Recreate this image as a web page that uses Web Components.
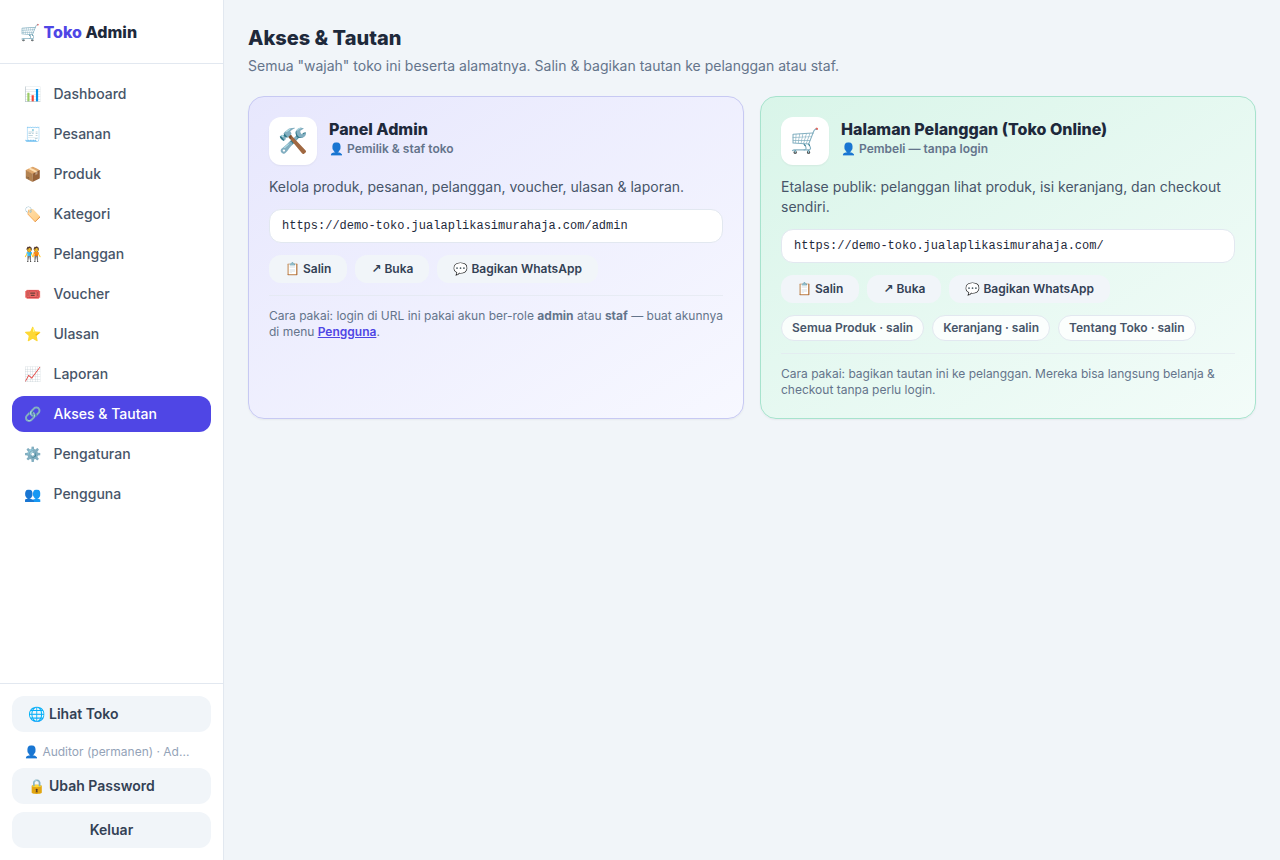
<!DOCTYPE html>
<html lang="id">
<head>
<meta charset="utf-8">
<title>Toko Admin</title>
<style>
  body {
    margin: 0;
    background: #f1f5f9;
    color: #1e293b;
    font: 14px/20px Inter, "Liberation Sans", sans-serif;
  }
</style>
</head>
<body>
<admin-app></admin-app>

<script>
class NavItem extends HTMLElement {
  constructor () {
    super()
    this.attachShadow({ mode: 'open' })
  }

  connectedCallback () {
    this.shadowRoot.innerHTML = `
      <style>
        :host { display: block; }
        a {
          display: flex;
          align-items: center;
          gap: 12.5px;
          padding: 8px 12px;
          border-radius: 12px;
          font-weight: 500;
          color: #475569;
        }
        :host([active]) a { background: #4f46e5; color: #fff; }
      </style>
      <a><span>${this.getAttribute('icon')}</span><span><slot></slot></span></a>
    `
  }
}
customElements.define('nav-item', NavItem)

class SoftButton extends HTMLElement {
  constructor () {
    super()
    this.attachShadow({ mode: 'open' })
  }

  connectedCallback () {
    this.shadowRoot.innerHTML = `
      <style>
        :host {
          display: block;
          padding: 8px 16px;
          border-radius: 12px;
          background: #f1f5f9;
          color: #334155;
          font-weight: 600;
        }
        :host([center]) { text-align: center; }
        :host([small]) { padding: 6px 16px; font-size: 12px; line-height: 16px; }
        ::slotted(.icon) { margin-right: 0.5px; }
        ::slotted(.arrow) { font-family: "DejaVu Sans", sans-serif; line-height: 1; }
      </style>
      <slot></slot>
    `
  }
}
customElements.define('soft-button', SoftButton)

class LinkChip extends HTMLElement {
  constructor () {
    super()
    this.attachShadow({ mode: 'open' })
  }

  connectedCallback () {
    this.shadowRoot.innerHTML = `
      <style>
        :host {
          display: block;
          padding: 4px 10px;
          border: 1px solid #e2e8f0;
          border-radius: 999px;
          background: rgba(255, 255, 255, 0.8);
          color: #475569;
          font-size: 12px;
          line-height: 16px;
          font-weight: 600;
        }
      </style>
      <slot></slot>
    `
  }
}
customElements.define('link-chip', LinkChip)

class SideBar extends HTMLElement {
  constructor () {
    super()
    this.attachShadow({ mode: 'open' })
  }

  connectedCallback () {
    this.shadowRoot.innerHTML = `
      <style>
        :host {
          display: flex;
          flex-direction: column;
          box-sizing: border-box;
          width: 224px;
          border-right: 1px solid #e2e8f0;
          background: #fff;
        }
        header {
          display: flex;
          align-items: center;
          box-sizing: border-box;
          height: 64px;
          padding: 0 20px;
          border-bottom: 1px solid #e2e8f0;
          font-size: 16px;
          line-height: 24px;
          font-weight: 800;
          white-space: pre;
        }
        header span { color: #4f46e5; }
        nav {
          display: flex;
          flex: 1;
          flex-direction: column;
          gap: 4px;
          padding: 12px;
        }
        footer {
          display: flex;
          flex-direction: column;
          gap: 8px;
          padding: 12px;
          border-top: 1px solid #e2e8f0;
        }
        .user {
          padding: 4px 12px 0;
          overflow: hidden;
          color: #94a3b8;
          font-size: 12px;
          line-height: 16px;
          text-overflow: ellipsis;
          white-space: nowrap;
        }
      </style>
      <header>🛒 <span>Toko</span> Admin</header>
      <nav>
        <nav-item icon="📊">Dashboard</nav-item>
        <nav-item icon="🧾">Pesanan</nav-item>
        <nav-item icon="📦">Produk</nav-item>
        <nav-item icon="🏷️">Kategori</nav-item>
        <nav-item icon="🧑‍🤝‍🧑">Pelanggan</nav-item>
        <nav-item icon="🎟️">Voucher</nav-item>
        <nav-item icon="⭐">Ulasan</nav-item>
        <nav-item icon="📈">Laporan</nav-item>
        <nav-item icon="🔗" active>Akses &amp; Tautan</nav-item>
        <nav-item icon="⚙️">Pengaturan</nav-item>
        <nav-item icon="👥">Pengguna</nav-item>
      </nav>
      <footer>
        <soft-button><span class="icon">🌐</span> Lihat Toko</soft-button>
        <div class="user">👤 Auditor (permanen) · Ad...</div>
        <soft-button><span class="icon">🔒</span> Ubah Password</soft-button>
        <soft-button center>Keluar</soft-button>
      </footer>
    `
  }
}
customElements.define('side-bar', SideBar)

class AccessCard extends HTMLElement {
  constructor () {
    super()
    this.attachShadow({ mode: 'open' })
  }

  connectedCallback () {
    this.shadowRoot.innerHTML = `
      <style>
        :host {
          display: block;
          box-sizing: border-box;
          padding: 20px;
          border: 1px solid #c7c9f3;
          border-radius: 16px;
          background: linear-gradient(to bottom right, #e7e7fd, #f7f8ff) border-box;
          box-shadow: 0 1px 2px rgba(0, 0, 0, 0.05);
        }
        :host([tone="green"]) {
          border-color: #a7e3cd;
          background: linear-gradient(to bottom right, #d9f5e9, #f3fcf9) border-box;
        }
        .head { display: flex; align-items: flex-start; gap: 12px; }
        .icon {
          display: grid;
          place-items: center;
          width: 48px;
          height: 48px;
          border-radius: 12px;
          background: #fff;
          box-shadow: 0 1px 2px rgba(0, 0, 0, 0.05);
          font-size: 24px;
          line-height: 32px;
        }
        h2 { margin: 0; font-size: 16px; line-height: 24px; font-weight: 800; }
        .who { color: #64748b; font-size: 12px; line-height: 16px; font-weight: 600; }
        p { margin: 12px 0 0; color: #475569; }
        .url {
          margin-top: 12px;
          padding: 8px 12px;
          border: 1px solid #e2e8f0;
          border-radius: 12px;
          background: #fff;
          font: 12px/16px "Liberation Mono", monospace;
        }
        .row { display: flex; gap: 8px; margin-top: 12px; }
        .note {
          margin-top: 12px;
          padding-top: 12px;
          border-top: 1px solid rgba(226, 232, 240, 0.7);
          color: #64748b;
          font-size: 12px;
          line-height: 16px;
        }
        slot[name="chips"] { display: flex; gap: 8px; }
        .chips:not(.filled) { display: none; }
      </style>
      <div class="head">
        <div class="icon">${this.getAttribute('icon')}</div>
        <div>
          <h2>${this.getAttribute('heading')}</h2>
          <div class="who">👤 ${this.getAttribute('who')}</div>
        </div>
      </div>
      <p>${this.getAttribute('about')}</p>
      <div class="url">${this.getAttribute('url')}</div>
      <div class="row">
        <soft-button small>📋 Salin</soft-button>
        <soft-button small><span class="arrow">↗</span> Buka</soft-button>
        <soft-button small>💬 Bagikan WhatsApp</soft-button>
      </div>
      <div class="row chips ${this.querySelector('[slot="chips"]') ? 'filled' : ''}"><slot name="chips"></slot></div>
      <div class="note"><slot></slot></div>
    `
  }
}
customElements.define('access-card', AccessCard)

class AdminApp extends HTMLElement {
  constructor () {
    super()
    this.attachShadow({ mode: 'open' })
  }

  connectedCallback () {
    this.shadowRoot.innerHTML = `
      <style>
        :host { display: flex; height: 100vh; }
        side-bar { flex: none; }
        main { flex: 1; min-width: 0; padding: 24px; }
        h1 { margin: 0; font-size: 20px; line-height: 28px; font-weight: 800; }
        .lead { margin: 4px 0 20px; color: #64748b; }
        .cards { display: grid; grid-template-columns: 1fr 1fr; gap: 16px; }
        b { font-weight: 700; }
        a { color: #4f46e5; font-weight: 600; text-decoration: underline; }
      </style>
      <side-bar></side-bar>
      <main>
        <h1>Akses &amp; Tautan</h1>
        <p class="lead">Semua "wajah" toko ini beserta alamatnya. Salin &amp; bagikan tautan ke pelanggan atau staf.</p>
        <div class="cards">
          <access-card icon="🛠️" heading="Panel Admin" who="Pemilik &amp; staf toko"
            about="Kelola produk, pesanan, pelanggan, voucher, ulasan &amp; laporan."
            url="https://demo-toko.jualaplikasimurahaja.com/admin">Cara pakai: login di URL ini pakai akun ber-role <b>admin</b> atau <b>staf</b> — buat akunnya di menu <a>Pengguna</a>.</access-card>
          <access-card tone="green" icon="🛒" heading="Halaman Pelanggan (Toko Online)" who="Pembeli — tanpa login"
            about="Etalase publik: pelanggan lihat produk, isi keranjang, dan checkout sendiri."
            url="https://demo-toko.jualaplikasimurahaja.com/"><link-chip slot="chips">Semua Produk · salin</link-chip><link-chip slot="chips">Keranjang · salin</link-chip><link-chip slot="chips">Tentang Toko · salin</link-chip>Cara pakai: bagikan tautan ini ke pelanggan. Mereka bisa langsung belanja &amp; checkout tanpa perlu login.</access-card>
        </div>
      </main>
    `
  }
}
customElements.define('admin-app', AdminApp)
</script>
</body>
</html>
